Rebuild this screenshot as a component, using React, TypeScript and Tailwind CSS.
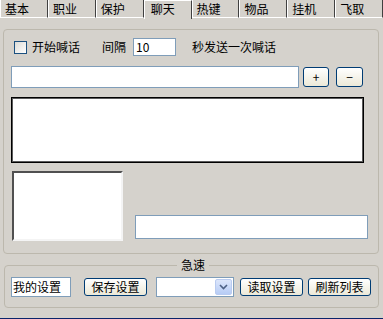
import React from "react";

const tabs = ["基本", "职业", "保护", "聊天", "热键", "物品", "挂机", "飞取"];

function XpButton({ label, className }: { label: string; className: string }) {
  return (
    <div
      className={
        "flex items-center justify-center border border-[#003c74] rounded-[3px] bg-gradient-to-b from-white to-[#ece9d8] text-[12px] leading-none text-black " +
        className
      }
    >
      {label}
    </div>
  );
}

export default function App() {
  return (
    <div
      className="w-[383px] h-[319px] bg-[#d5d2cc] flex flex-col overflow-hidden text-black"
      style={{ fontFamily: '"Noto Sans CJK SC", "Noto Sans", sans-serif' }}
    >
      {/* Tab strip */}
      <div className="flex h-[19px] items-start">
        {tabs.map((t, i) =>
          i === 3 ? (
            <div
              key={t}
              className="w-[48px] h-[19px] border-l border-t border-white border-r border-r-[#404040] text-[12px] leading-[12px] pl-[6px] pt-[2px]"
            >
              {t}
            </div>
          ) : (
            <div
              key={t}
              className="w-[48px] h-[18px] border-l border-white border-r border-r-[#404040] border-b border-b-white text-[12px] leading-[12px] pl-[4px] pt-[3px]"
            >
              {t}
            </div>
          )
        )}
      </div>

      {/* Main group box */}
      <div className="ml-[3px] mt-[10px] w-[376px] h-[225px] border border-[#bcb8ad] rounded-[4px] flex flex-col">
        {/* Row 1 */}
        <div className="flex items-center h-[18px] mt-[8px] pl-[10px] text-[12px] leading-none">
          <div className="w-[13px] h-[13px] border border-[#1c5180] bg-gradient-to-br from-[#dcdcd7] to-white" />
          <span className="ml-[5px]">开始喊话</span>
          <span className="ml-[22px]">间隔</span>
          <div className="ml-[7px] w-[43px] h-[18px] bg-white border border-[#7f9db9] flex items-center pl-[2px]">
            10
          </div>
          <span className="ml-[16px]">秒发送一次喊话</span>
        </div>

        {/* Row 2 */}
        <div className="flex items-center mt-[10px] pl-[7px] h-[22px]">
          <div className="w-[288px] h-[22px] bg-white border border-[#7f9db9]" />
          <XpButton label="+" className="ml-[4px] w-[26px] h-[20px]" />
          <XpButton label="−" className="ml-[7px] w-[27px] h-[20px]" />
        </div>

        {/* Row 3 */}
        <div className="mt-[9px] ml-[7px] w-[353px] h-[66px] bg-white border border-black shadow-[inset_0_0_0_1px_#5a5a5a]" />

        {/* Row 4 */}
        <div className="flex mt-[8px] ml-[8px]">
          <div className="w-[111px] h-[70px] bg-white border-2 border-t-[#505050] border-l-[#505050] border-r-[#f4f4f4] border-b-[#f4f4f4]" />
          <div className="self-end mb-[2px] ml-[12px] w-[233px] h-[24px] bg-white border border-[#7f9db9]" />
        </div>
      </div>

      {/* 急速 group */}
      <div className="relative ml-[4px] mt-[11px] w-[375px] h-[43px] border border-[#bcb8ad] rounded-[4px] flex items-center pl-[6px]">
        <span className="absolute left-[172px] top-[-8px] px-[4px] bg-[#d5d2cc] text-[12px] leading-[14px]">
          急速
        </span>
        <div className="w-[60px] h-[20px] bg-white border border-[#7f9db9] text-[12px] leading-none flex items-center pl-[1px]">
          我的设置
        </div>
        <XpButton label="保存设置" className="ml-[13px] w-[63px] h-[18px]" />
        <div className="ml-[9px] w-[78px] h-[20px] bg-white border border-[#7f9db9] flex justify-end p-[1px]">
          <div className="w-[17px] h-full rounded-[2px] bg-gradient-to-b from-[#dce6fb] to-[#b7ccf5] border border-[#b9cbf0] flex items-center justify-center">
            <svg width="9" height="6" viewBox="0 0 9 6">
              <path d="M1 1 L4.5 4.5 L8 1" fill="none" stroke="#4d6185" strokeWidth="1.6" />
            </svg>
          </div>
        </div>
        <XpButton label="读取设置" className="ml-[6px] w-[63px] h-[18px]" />
        <XpButton label="刷新列表" className="ml-[5px] w-[63px] h-[18px]" />
      </div>

      <div className="mt-auto h-[1px] bg-[#0a246a]" />
    </div>
  );
}
